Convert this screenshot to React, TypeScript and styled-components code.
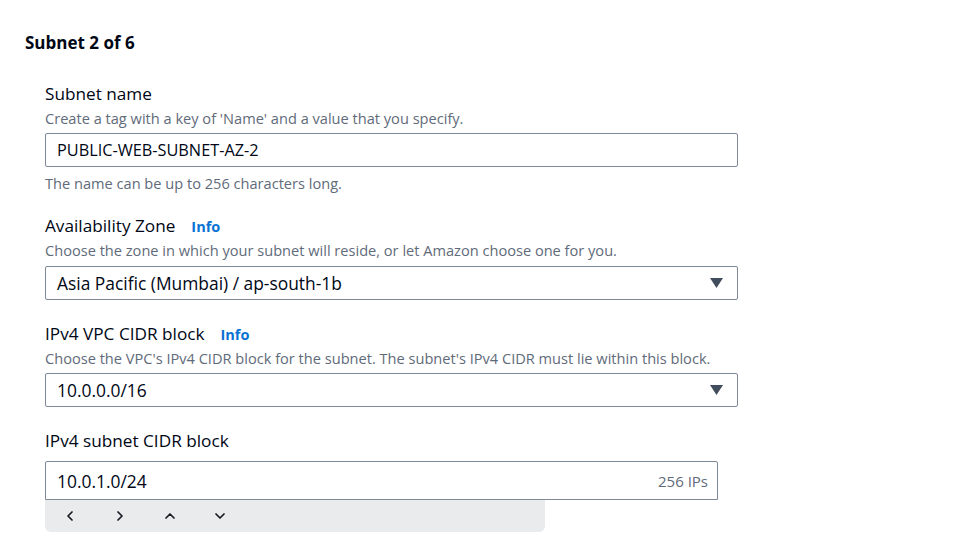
import React from "react";
import styled, { createGlobalStyle } from "styled-components";

const Global = createGlobalStyle`
  body { margin: 0; background: #fff; font-family: "Open Sans", "Noto Sans", sans-serif; color: #000716; }
`;

const Page = styled.div`
  padding: 32px 0 0 25px;
`;

const Heading = styled.h2`
  margin: 0;
  font-size: 17px;
  line-height: 22px;
  font-weight: 700;
  color: #000716;
`;

const Fields = styled.div`
  display: flex;
  flex-direction: column;
  gap: 23px;
  margin: 29px 0 0 20px;
  width: 693px;
`;

const Field = styled.div`
  display: flex;
  flex-direction: column;
`;

const LabelRow = styled.div`
  display: flex;
  align-items: baseline;
  gap: 16px;
  font-size: 17.2px;
  line-height: 22px;
  color: #000716;
`;

const Info = styled.a`
  font-size: 14.5px;
  font-weight: 700;
  color: #0972d3;
  text-decoration: none;
`;

const Desc = styled.div<{ $top?: number }>`
  font-size: 14.6px;
  line-height: 18px;
  color: #5f6b7a;
  margin-top: ${(p) => p.$top ?? 4}px;
`;

const Control = styled.div<{ $top: number; $height: number; $width?: number; $size?: number; $flatBottom?: boolean }>`
  box-sizing: border-box;
  margin-top: ${(p) => p.$top}px;
  height: ${(p) => p.$height}px;
  width: ${(p) => p.$width ?? 693}px;
  border: 1px solid #7d8998;
  border-radius: ${(p) => (p.$flatBottom ? "2px 2px 0 0" : "2px")};
  display: flex;
  align-items: center;
  padding: 0 14px 0 11px;
  font-size: ${(p) => p.$size ?? 17.4}px;
  color: #000716;
  background: #fff;
`;

const Value = styled.span`
  flex: 1;
`;

const Suffix = styled.span`
  font-size: 15px;
  color: #5f6b7a;
  margin-right: -5px;
`;

const Caret = styled.svg`
  width: 13px;
  height: 10px;
  fill: #414d5c;
`;

const Toolbar = styled.div`
  box-sizing: border-box;
  width: 500px;
  height: 32px;
  background: #e9ebed;
  border-radius: 0 0 6px 6px;
  display: flex;
  align-items: center;
  gap: 36px;
  padding-left: 18px;
`;

const ToolButton = styled.svg`
  width: 14px;
  height: 14px;
  fill: none;
  stroke: #16191f;
  stroke-width: 1.7;
  stroke-linecap: round;
  stroke-linejoin: round;
`;

const DownCaret = () => (
  <Caret viewBox="0 0 13 10">
    <polygon points="0,0 13,0 6.5,10" />
  </Caret>
);

export default function App() {
  return (
    <>
      <Global />
      <Page>
        <Heading>Subnet 2 of 6</Heading>
        <Fields>
          <Field>
            <LabelRow>Subnet name</LabelRow>
            <Desc>Create a tag with a key of 'Name' and a value that you specify.</Desc>
            <Control $top={6} $height={34} $size={16.3}>
              <Value>PUBLIC-WEB-SUBNET-AZ-2</Value>
            </Control>
            <Desc $top={7}>The name can be up to 256 characters long.</Desc>
          </Field>
          <Field>
            <LabelRow>
              Availability Zone <Info href="#">Info</Info>
            </LabelRow>
            <Desc $top={3}>Choose the zone in which your subnet will reside, or let Amazon choose one for you.</Desc>
            <Control $top={7} $height={34}>
              <Value>Asia Pacific (Mumbai) / ap-south-1b</Value>
              <DownCaret />
            </Control>
          </Field>
          <Field>
            <LabelRow>
              IPv4 VPC CIDR block <Info href="#">Info</Info>
            </LabelRow>
            <Desc $top={3}>
              Choose the VPC's IPv4 CIDR block for the subnet. The subnet's IPv4 CIDR must lie within this block.
            </Desc>
            <Control $top={6} $height={34}>
              <Value>10.0.0.0/16</Value>
              <DownCaret />
            </Control>
          </Field>
          <Field>
            <LabelRow>IPv4 subnet CIDR block</LabelRow>
            <Control $top={9} $height={39} $width={673} $flatBottom>
              <Value>10.0.1.0/24</Value>
              <Suffix>256 IPs</Suffix>
            </Control>
            <Toolbar>
              <ToolButton viewBox="0 0 14 14"><polyline points="9,3 5,7 9,11" /></ToolButton>
              <ToolButton viewBox="0 0 14 14"><polyline points="5,3 9,7 5,11" /></ToolButton>
              <ToolButton viewBox="0 0 14 14"><polyline points="3,9 7,5 11,9" /></ToolButton>
              <ToolButton viewBox="0 0 14 14"><polyline points="3,5 7,9 11,5" /></ToolButton>
            </Toolbar>
          </Field>
        </Fields>
      </Page>
    </>
  );
}
